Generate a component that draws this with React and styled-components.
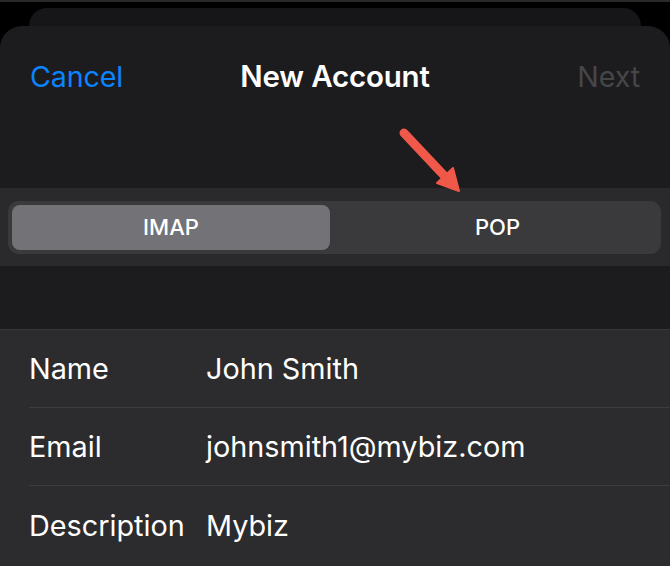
import React from 'react';
import styled, { createGlobalStyle } from 'styled-components';

const GlobalStyle = createGlobalStyle`
    html, body {
        margin: 0;
        padding: 0;
        background: #000;
        font-family: Inter, "Noto Sans", "Liberation Sans", sans-serif;
        -webkit-font-smoothing: antialiased;
    }
`;

const fields = [
    { label: 'Name', value: 'John Smith' },
    { label: 'Email', value: 'johnsmith1@mybiz.com' },
    { label: 'Description', value: 'Mybiz' },
];

const App = () => {
    return (
        <Screen>
            <GlobalStyle />
            <TopLine />
            <BackCard />
            <Sheet>
                <NavBar>
                    <NavButton color="#0a84ff">Cancel</NavButton>
                    <Title>New Account</Title>
                    <NavButton color="#464649" align="right">Next</NavButton>
                </NavBar>
                <SegmentBand>
                    <Segmented>
                        <Segment active>IMAP</Segment>
                        <Segment>POP</Segment>
                    </Segmented>
                </SegmentBand>
                <Gap />
                <List>
                    {fields.map((f, index) => (
                        <Row key={index} last={index === fields.length - 1}>
                            <Label>{f.label}</Label>
                            <Value>{f.value}</Value>
                        </Row>
                    ))}
                </List>
                <Arrow width="80" height="80" viewBox="0 0 80 80">
                    <path d="M9 8 L58 60" stroke="#f0584a" strokeWidth="9" strokeLinecap="round" fill="none" />
                    <path d="M42 58 L64 66 L58 43 Z" fill="#f0584a" stroke="#f0584a" strokeWidth="2" strokeLinejoin="round" />
                </Arrow>
            </Sheet>
        </Screen>
    );
}

const Screen = styled.div`
    width: 670px;
    height: 566px;
    overflow: hidden;
    background: #000;
    display: flex;
    flex-direction: column;
`;

const TopLine = styled.div`
    height: 2px;
    background: #2a2a2a;
    margin-bottom: 6px;
`;

const BackCard = styled.div`
    height: 18px;
    margin: 0 29px;
    background: #161618;
    border-radius: 20px 20px 0 0;
`;

const Sheet = styled.div`
    position: relative;
    flex: 1;
    background: #1c1c1e;
    border-radius: 22px 22px 0 0;
    display: flex;
    flex-direction: column;
`;

const NavBar = styled.div`
    height: 100px;
    padding: 0 30px;
    display: grid;
    grid-template-columns: 1fr auto 1fr;
    align-items: center;
    margin-bottom: 62px;
`;

const NavButton = styled.div`
    color: ${props => props.color};
    font-size: 28.6px;
    text-align: ${props => props.align || 'left'};
    letter-spacing: -0.1px;
`;

const Title = styled.div`
    color: #fff;
    font-size: 29.5px;
    font-weight: 600;
    letter-spacing: -0.2px;
`;

const SegmentBand = styled.div`
    height: 78px;
    background: #2a2a2c;
    display: flex;
    align-items: center;
    padding: 0 9px 0 8px;
`;

const Segmented = styled.div`
    flex: 1;
    height: 53px;
    box-sizing: border-box;
    padding: 4px;
    background: #3a3a3d;
    border-radius: 11px;
    display: flex;
`;

const Segment = styled.div`
    flex: ${props => props.active ? '0 0 318px' : '1'};
    padding-left: ${props => props.active ? '0' : '8px'};
    display: flex;
    align-items: center;
    justify-content: center;
    border-radius: 8px;
    background: ${props => props.active ? '#737277' : 'transparent'};
    color: #fff;
    font-size: 22px;
    font-weight: 500;
`;

const Gap = styled.div`
    height: 63px;
    border-bottom: 1px solid #38383a;
`;

const List = styled.div`
    flex: 1;
    background: #2c2c2e;
    padding-left: 29px;
`;

const Row = styled.div`
    height: 78px;
    box-sizing: border-box;
    display: flex;
    align-items: center;
    border-bottom: ${props => props.last ? 'none' : '1px solid #3d3d40'};
    color: #fff;
    font-size: 28.8px;
`;

const Label = styled.div`
    width: 177px;
    flex-shrink: 0;
`;

const Value = styled.div`
    flex: 1;
`;

const Arrow = styled.svg`
    position: absolute;
    left: 395px;
    top: 99px;
`;

export default App;
